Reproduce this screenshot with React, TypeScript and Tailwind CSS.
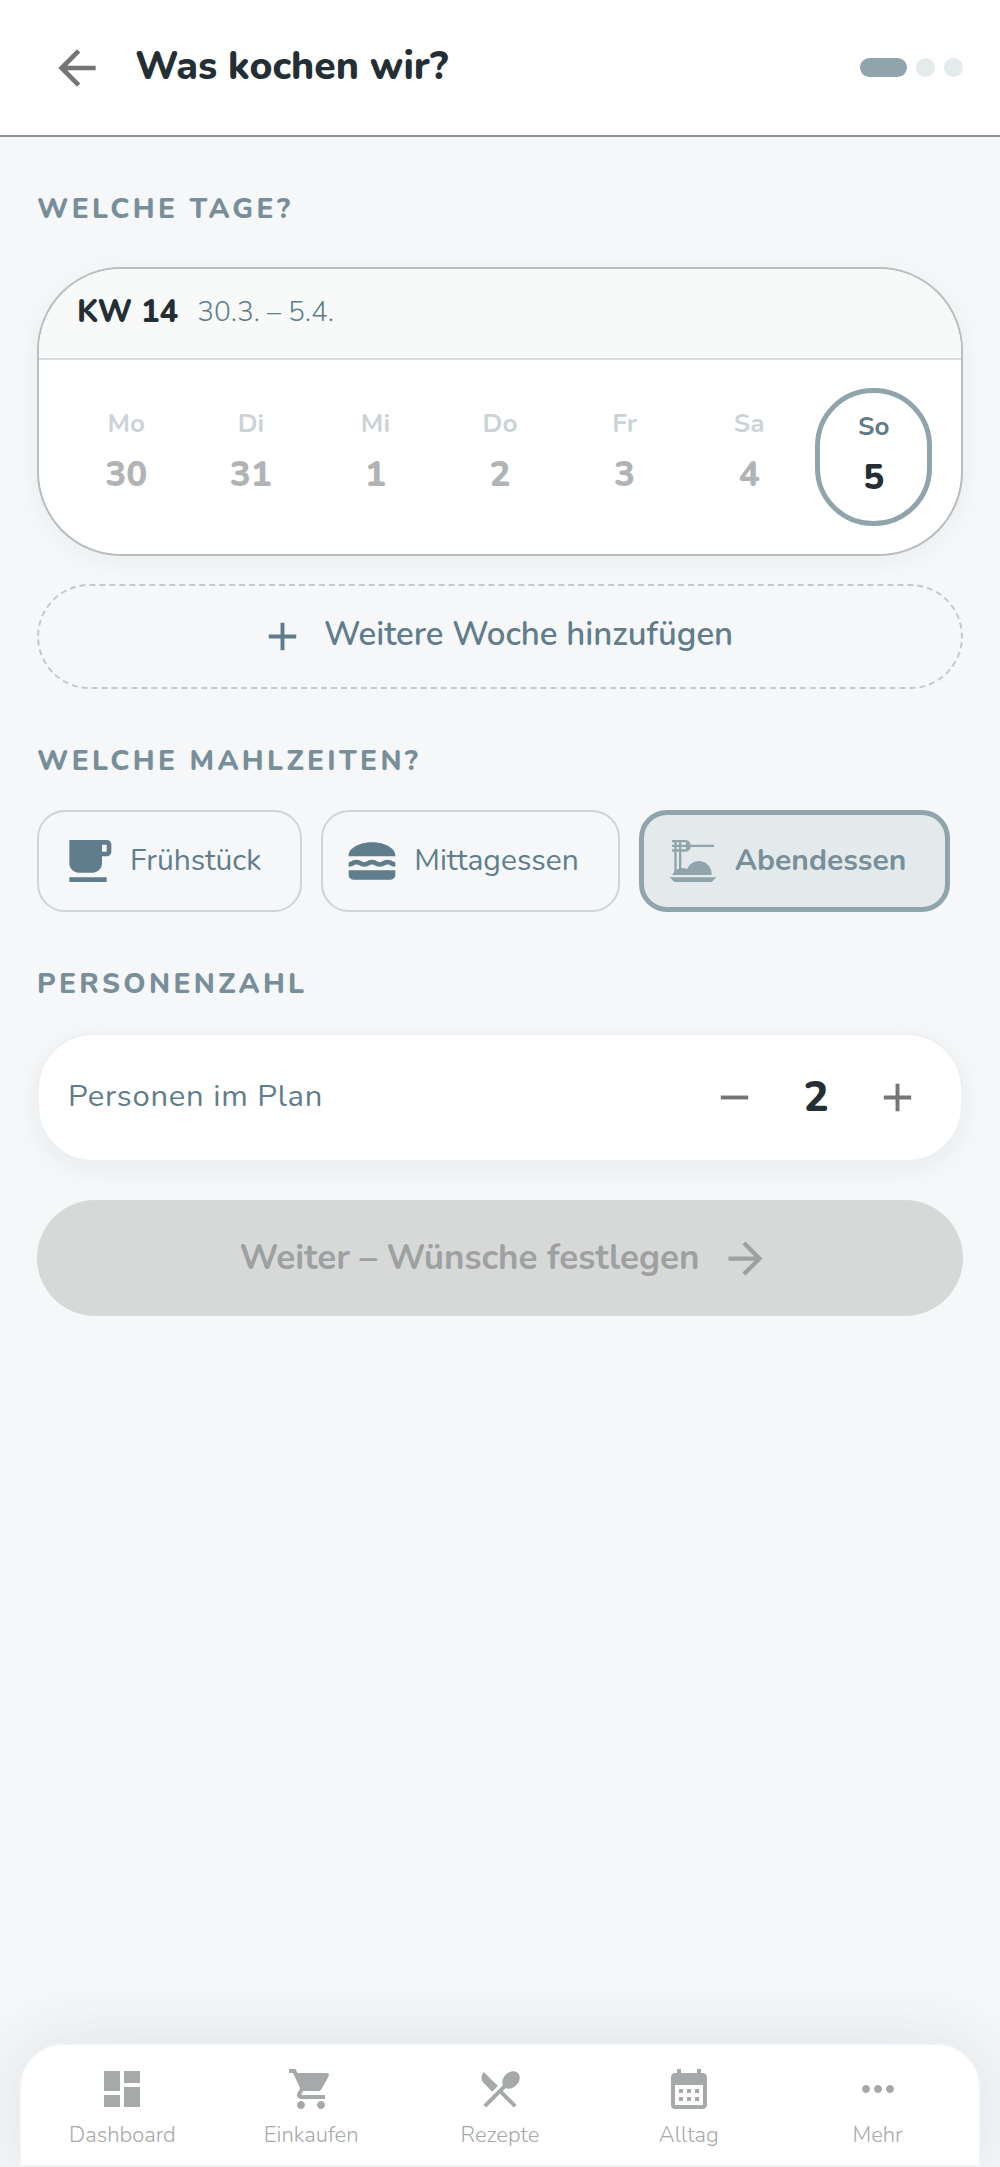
import {useState} from "react";
import {
    MdAdd,
    MdArrowBack,
    MdArrowForward,
    MdCalendarMonth,
    MdDashboard,
    MdDinnerDining,
    MdFreeBreakfast,
    MdLunchDining,
    MdMoreHoriz,
    MdRemove,
    MdRestaurantMenu,
    MdShoppingCart,
} from "react-icons/md";

const days = [
    {label: "Mo", date: 30, past: true},
    {label: "Di", date: 31, past: true},
    {label: "Mi", date: 1, past: true},
    {label: "Do", date: 2, past: true},
    {label: "Fr", date: 3, past: true},
    {label: "Sa", date: 4, past: true},
    {label: "So", date: 5, past: false},
];

const meals = [
    {id: "breakfast", label: "Frühstück", icon: MdFreeBreakfast},
    {id: "lunch", label: "Mittagessen", icon: MdLunchDining},
    {id: "dinner", label: "Abendessen", icon: MdDinnerDining},
];

const navItems = [
    {label: "Dashboard", icon: MdDashboard},
    {label: "Einkaufen", icon: MdShoppingCart},
    {label: "Rezepte", icon: MdRestaurantMenu},
    {label: "Alltag", icon: MdCalendarMonth},
    {label: "Mehr", icon: MdMoreHoriz},
];

export default function App() {
    const [selectedDays, setSelectedDays] = useState<number[]>([]);
    const [selectedMeals, setSelectedMeals] = useState<string[]>(["dinner"]);
    const [persons, setPersons] = useState(2);

    const toggleDay = (date: number) => {
        setSelectedDays((prev) =>
            prev.includes(date) ? prev.filter((d) => d !== date) : [...prev, date]
        );
    };

    const toggleMeal = (id: string) => {
        setSelectedMeals((prev) =>
            prev.includes(id) ? prev.filter((m) => m !== id) : [...prev, id]
        );
    };

    const canContinue = selectedDays.length > 0 && selectedMeals.length > 0;

    return (
        <div className="min-h-screen flex flex-col overflow-x-hidden bg-[#f5f7f9] font-['Nunito','Lato',sans-serif]">
            {/* Kopfzeile */}
            <header className="flex items-center h-[137px] pl-[49px] pr-[37px] bg-white border-b-2 border-[#8c9091]">
                <button aria-label="Zurück" className="text-[#757575] cursor-pointer">
                    <MdArrowBack className="size-14"/>
                </button>
                <h1 className="ml-[30px] pb-[2px] text-[39px] leading-[48px] font-extrabold text-[#232f34]">Was kochen wir?</h1>
                <div className="ml-auto flex gap-[9px]">
                    <span className="w-[47px] h-[19px] rounded-full bg-[#90a4ab]"/>
                    <span className="size-[19px] rounded-full bg-[#e5eaec]"/>
                    <span className="size-[19px] rounded-full bg-[#e5eaec]"/>
                </div>
            </header>

            <main className="flex flex-col px-[37px]">
                {/* Tage */}
                <SectionTitle>Welche Tage?</SectionTitle>
                <section className="mt-10 bg-white border-2 border-[#b9bcbd] rounded-[84px] overflow-hidden
                                    shadow-[0_5px_28px_rgba(40,50,50,0.05)]">
                    <div className="flex items-center gap-[19px] h-[91px] px-[38px] pb-1 bg-[#f8faf9] border-b-2 border-[#d5dbdd]">
                        <h3 className="text-[31px] leading-[40px] font-extrabold text-[#232f34]">KW 14</h3>
                        <span className="text-[28px] leading-[40px] font-light text-[#607d8b]">30.3. – 5.4.</span>
                    </div>
                    <div className="grid grid-cols-7 px-[25px] py-7">
                        {days.map((day) => (
                            <DayCell
                                key={day.label}
                                {...day}
                                selected={selectedDays.includes(day.date)}
                                onClick={() => toggleDay(day.date)}
                            />
                        ))}
                    </div>
                </section>

                <button className="mt-7 flex items-center justify-center gap-[18px] h-[105px] pr-2 rounded-full border-2
                                   border-dashed border-[#c4c9cb] text-[33px] leading-[40px] font-semibold
                                   text-[#607d8b] cursor-pointer">
                    <MdAdd className="size-[47px]"/>
                    <span className="pb-1">Weitere Woche hinzufügen</span>
                </button>

                {/* Mahlzeiten */}
                <SectionTitle>Welche Mahlzeiten?</SectionTitle>
                <div className="mt-[31px] flex flex-wrap gap-[19px]">
                    {meals.map(({id, label, icon: Icon}) => {
                        const active = selectedMeals.includes(id);
                        return (
                            <button
                                key={id}
                                onClick={() => toggleMeal(id)}
                                aria-pressed={active}
                                className={`flex items-center gap-[14px] h-[102px] pl-[21px] pr-[39px] rounded-[28px]
                                            text-[30px] leading-[40px] cursor-pointer ${
                                    active
                                        ? "border-5 border-[#90a4ab] bg-[#e4e9eb] font-bold text-[#788f9a]"
                                        : "border-2 border-[#ced5d8] text-[#607d8b]"
                                }`}
                            >
                                <Icon className={`size-14 ${active ? "text-[#90a4ab]" : ""}`}/>
                                {label}
                            </button>
                        );
                    })}
                </div>

                {/* Personen */}
                <SectionTitle>Personenzahl</SectionTitle>
                <section className="mt-[31px] flex items-center h-[129px] pl-[29px] pr-[40px] bg-white bg-clip-padding border-2
                                    border-[#eef0f1] rounded-[56px] shadow-[0_7px_28px_rgba(40,50,45,0.06)]">
                    <span className="pb-1 text-[31px] leading-[40px] tracking-wide text-[#607d8b]">Personen im Plan</span>
                    <div className="ml-auto flex items-center text-[#757575]">
                        <button
                            aria-label="Weniger Personen"
                            onClick={() => setPersons(Math.max(1, persons - 1))}
                            className="cursor-pointer"
                        >
                            <MdRemove className="size-[47px]"/>
                        </button>
                        <span className="w-[116px] text-center text-[42px] leading-[48px] font-extrabold text-[#232f34]">
                            {persons}
                        </span>
                        <button
                            aria-label="Mehr Personen"
                            onClick={() => setPersons(persons + 1)}
                            className="cursor-pointer"
                        >
                            <MdAdd className="size-[47px]"/>
                        </button>
                    </div>
                </section>

                <button
                    disabled={!canContinue}
                    className="mt-[38px] flex items-center justify-center gap-5 h-[116px] pl-[10px] rounded-full bg-[#607d8b] text-white
                               text-[35px] leading-[48px] font-bold disabled:bg-[#d7d9d9] disabled:text-[#9fa1a1]"
                >
                    Weiter – Wünsche festlegen
                    <MdArrowForward className="size-[51px]"/>
                </button>
            </main>

            {/* Navigation unten */}
            <nav className="mt-auto mx-[19px] flex h-[124px] px-[7px] pt-5 bg-white border-2 border-[#f0f2f3]
                            rounded-t-[44px] shadow-[0_0_70px_rgba(60,80,85,0.12)]">
                {navItems.map(({label, icon: Icon}) => (
                    <a key={label} href="#" className="flex-1 flex flex-col items-center gap-[6px] text-[#a5a9aa]">
                        <Icon className="size-12"/>
                        <span className="text-[22px] leading-[32px] font-light">{label}</span>
                    </a>
                ))}
            </nav>
        </div>
    );
}

function SectionTitle({children}: {children: string}) {
    return (
        <h2 className="mt-[54px] text-[28px] leading-[36px] font-extrabold tracking-[0.12em] uppercase text-[#788f9a]">
            {children}
        </h2>
    );
}

function DayCell({
                     label,
                     date,
                     past,
                     selected,
                     onClick,
                 }: {
    label: string;
    date: number;
    past: boolean;
    selected: boolean;
    onClick: () => void;
}) {
    return (
        <button
            onClick={onClick}
            disabled={past}
            className={`mx-1 flex flex-col items-center gap-[10px] h-[138px] pt-[17px] rounded-[58px] ${
                past ? "border-2 border-transparent" : "border-5 border-[#90a4ab] cursor-pointer"
            } ${selected ? "bg-[#e4e9eb]" : ""}`}
        >
            <span className={`text-[26px] leading-[34px] font-bold ${
                past ? "text-[#cbd3d7]" : "text-[#5f7b88]"
            }`}>{label}</span>
            <span className={`text-[35px] leading-[48px] font-extrabold ${
                past ? "text-[#b1b4b5]" : "text-[#232f34]"
            }`}>{date}</span>
        </button>
    );
}
